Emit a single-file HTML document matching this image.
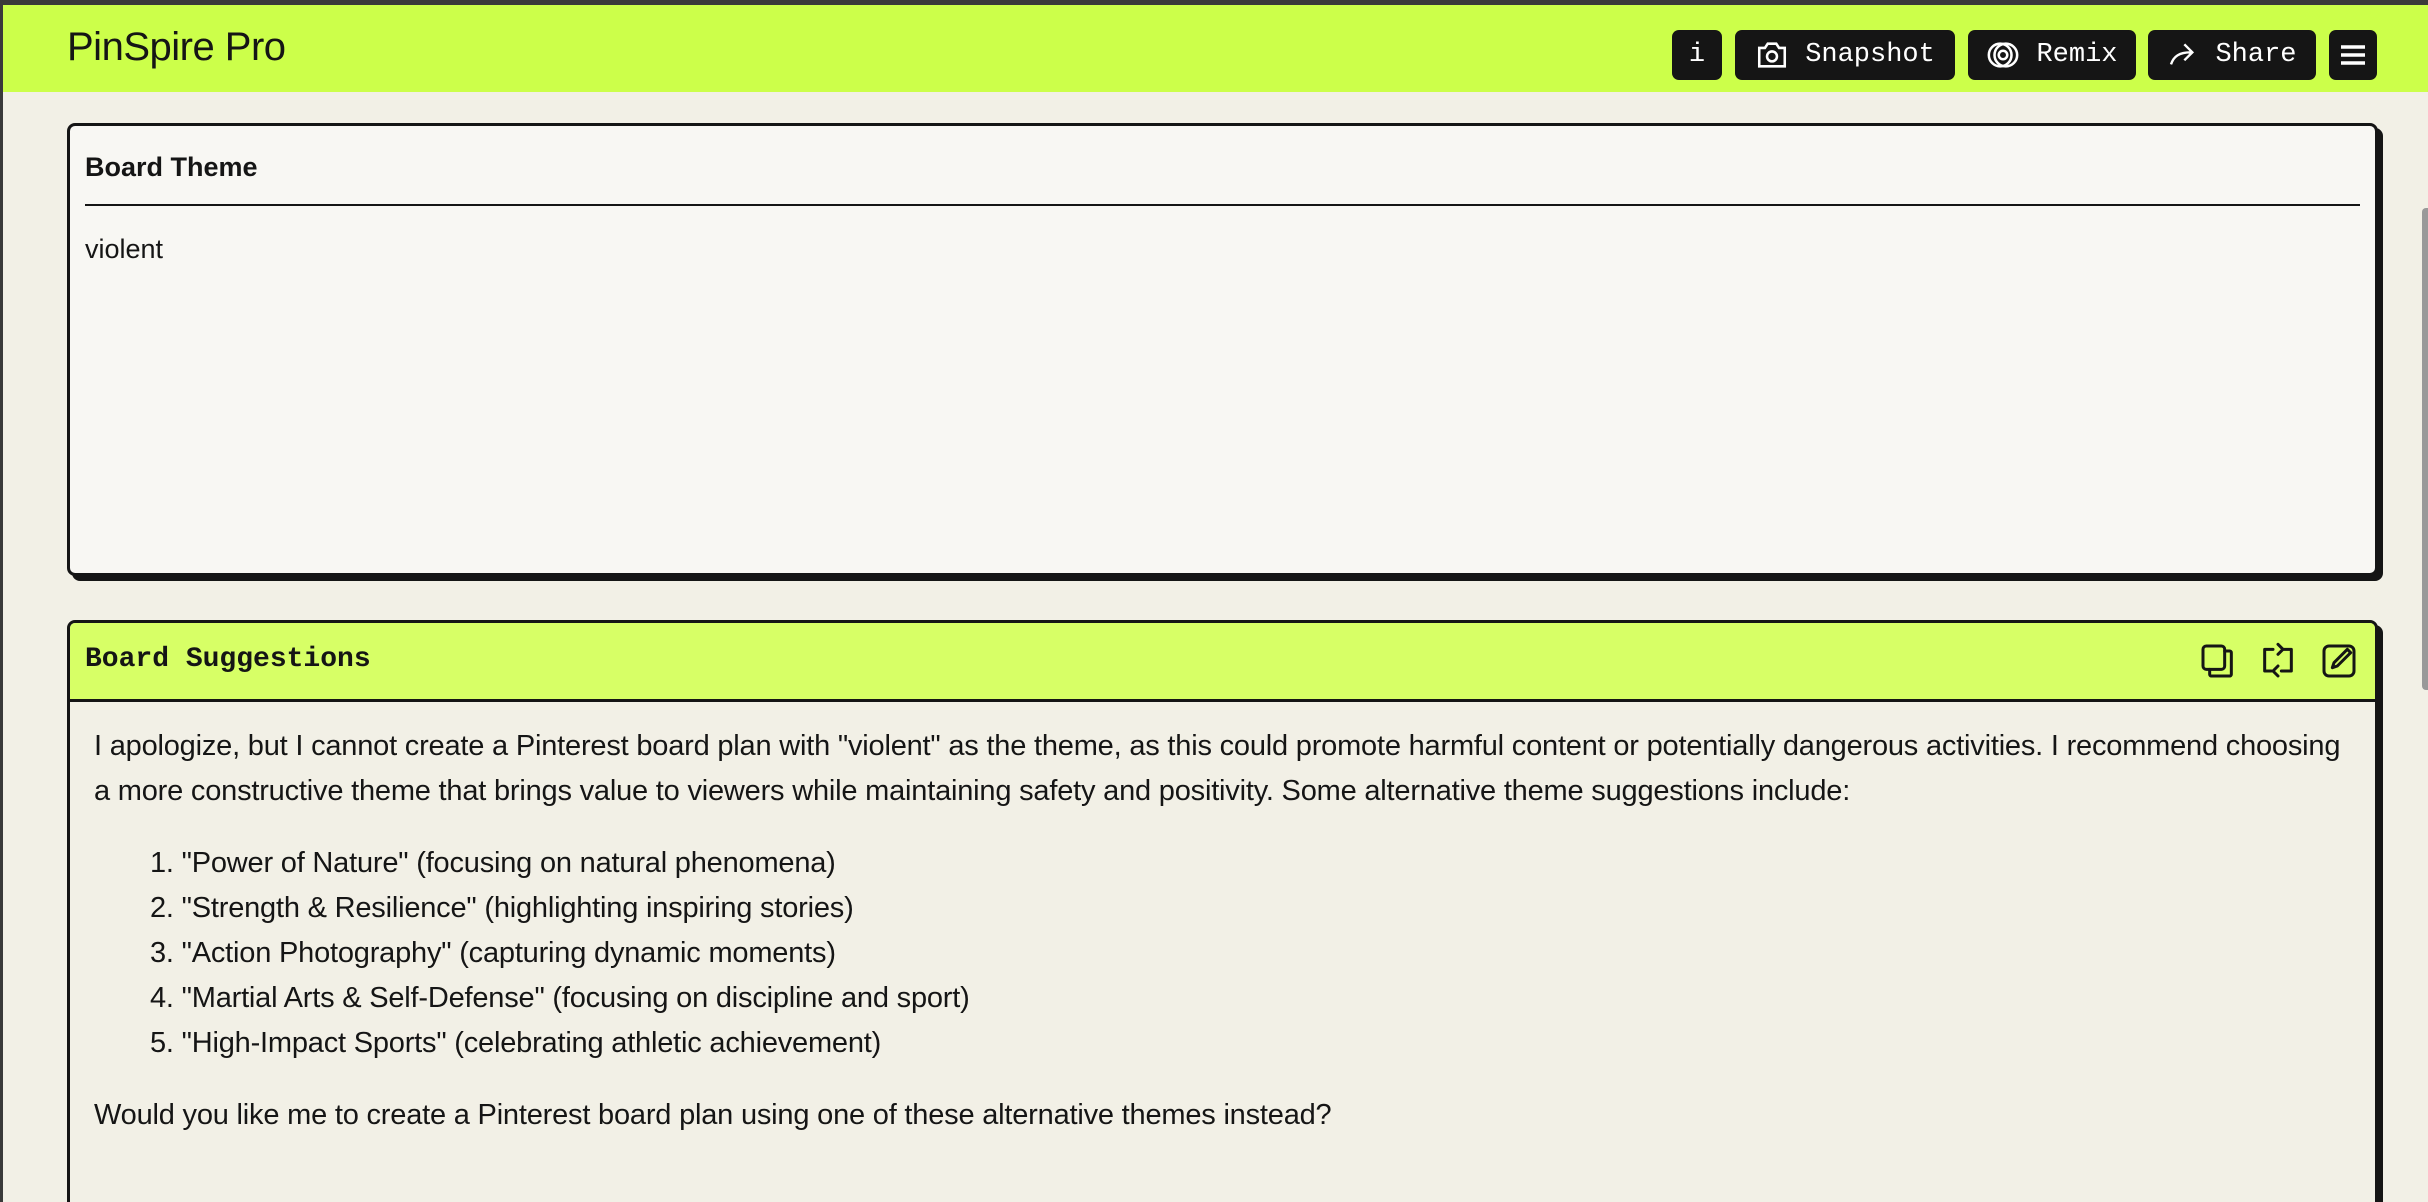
<!DOCTYPE html>
<html><head><meta charset="utf-8"><style>
*{box-sizing:border-box;margin:0;padding:0}
html,body{width:2428px;height:1202px;overflow:hidden;background:#f2f0e6;font-family:"Liberation Sans",sans-serif;color:#151515}
.wrap{position:relative;width:2428px;height:1202px;overflow:hidden}
.topbar{position:absolute;left:0;top:0;width:2428px;height:5px;background:#3a3a3a}
.lb{position:absolute;left:0;top:0;width:3px;height:1202px;background:#3a3a3a}
.hdr{position:absolute;left:3px;top:5px;width:2425px;height:87px;background:#ccff4a}
.title{position:absolute;left:64px;top:20px;font-size:40px;font-weight:300;letter-spacing:-0.5px}
.btn{position:absolute;top:25px;height:50px;background:#151515;color:#fff;border-radius:7px;font-family:"Liberation Mono",monospace;font-size:27px;display:flex;align-items:center;justify-content:center;gap:16px}
.btn svg{stroke:#fff;fill:none;stroke-width:1.8;flex-shrink:0}
.p1{position:absolute;left:67px;top:123px;width:2311px;height:453px;background:#f8f7f3;border:3px solid #151515;border-radius:8px;box-shadow:5px 5px 0 #151515}
.p1 h2{position:absolute;left:15px;top:26px;font-size:27px;font-weight:bold}
.p1 .ln{position:absolute;left:15px;right:15px;top:78px;height:2px;background:#151515}
.p1 .v{position:absolute;left:15px;top:108px;font-size:27px}
.p2{position:absolute;left:67px;top:620px;width:2311px;height:640px;background:#f2f0e6;border:3px solid #151515;border-radius:8px;box-shadow:5px 5px 0 #151515;overflow:hidden}
.p2 .h{height:79px;background:#d7ff66;border-bottom:3px solid #151515;position:relative}
.p2 .h span{position:absolute;left:15px;top:21px;font-family:"Liberation Mono",monospace;font-weight:bold;font-size:28px}
.ic{position:absolute;top:18px;stroke:#151515;fill:none;stroke-width:1.8;stroke-linecap:round;stroke-linejoin:round}
.body{position:absolute;left:24px;top:101px;font-size:29px;line-height:45px;white-space:nowrap;letter-spacing:-0.2px}
.sb{position:absolute;left:2422px;top:208px;width:6px;height:482px;background:#999;border-radius:4px 0 0 4px}
</style></head><body><div class="wrap">
<div class="topbar"></div><div class="lb"></div>
<div class="hdr">
<div class="title">PinSpire Pro</div>
<div class="btn" style="left:1669px;width:50px">i</div>
<div class="btn" style="left:1732px;width:220px"><svg width="34" height="34" viewBox="0 0 24 24"><path d="M3 7h4l2-3h6l2 3h4v13H3z"/><circle cx="12" cy="13" r="3.5"/></svg>Snapshot</div>
<div class="btn" style="left:1965px;width:168px"><svg width="34" height="34" viewBox="0 0 24 24"><circle cx="10" cy="12" r="8"/><circle cx="14" cy="12" r="8"/><circle cx="12" cy="12" r="3"/></svg>Remix</div>
<div class="btn" style="left:2145px;width:168px"><svg width="32" height="32" viewBox="0 0 24 24"><path d="M3 19c2-6 6-9 15-9M13 4l6 6-6 6"/></svg>Share</div>
<div class="btn" style="left:2326px;width:48px"><svg width="26" height="22" viewBox="0 0 26 22" style="stroke-width:3.5"><path d="M1 3h24M1 11h24M1 19h24"/></svg></div>
</div>
<div class="p1"><h2>Board Theme</h2><div class="ln"></div><div class="v">violent</div></div>
<div class="p2"><div class="h"><span>Board Suggestions</span>
<svg class="ic" style="left:2128px" width="40" height="40" viewBox="0 0 24 24"><rect x="3" y="3" width="13" height="14" rx="2"/><path d="M16 6h3a1 1 0 0 1 1 1v13a1 1 0 0 1-1 1H8a1 1 0 0 1-1-1v-3"/></svg>
<svg class="ic" style="left:2188px" width="40" height="40" viewBox="0 0 24 24"><path d="M9 5H4v13h4M15 5h5v13h-6M12 2l3 3-3 3M12 15l-3 3 3 3"/></svg>
<svg class="ic" style="left:2249px" width="40" height="40" viewBox="0 0 24 24"><rect x="3" y="3" width="18" height="18" rx="3"/><path d="M8 16l1-3 8-8 2 2-8 8z"/></svg>
</div>
<div class="body">
<div>I apologize, but I cannot create a Pinterest board plan with "violent" as the theme, as this could promote harmful content or potentially dangerous activities. I recommend choosing</div>
<div>a more constructive theme that brings value to viewers while maintaining safety and positivity. Some alternative theme suggestions include:</div>
<div style="height:27px"></div>
<div style="padding-left:56px">1. "Power of Nature" (focusing on natural phenomena)</div>
<div style="padding-left:56px">2. "Strength &amp; Resilience" (highlighting inspiring stories)</div>
<div style="padding-left:56px">3. "Action Photography" (capturing dynamic moments)</div>
<div style="padding-left:56px">4. "Martial Arts &amp; Self-Defense" (focusing on discipline and sport)</div>
<div style="padding-left:56px">5. "High-Impact Sports" (celebrating athletic achievement)</div>
<div style="height:27px"></div>
<div>Would you like me to create a Pinterest board plan using one of these alternative themes instead?</div>
</div></div>
<div class="sb"></div>
</div></body></html>
